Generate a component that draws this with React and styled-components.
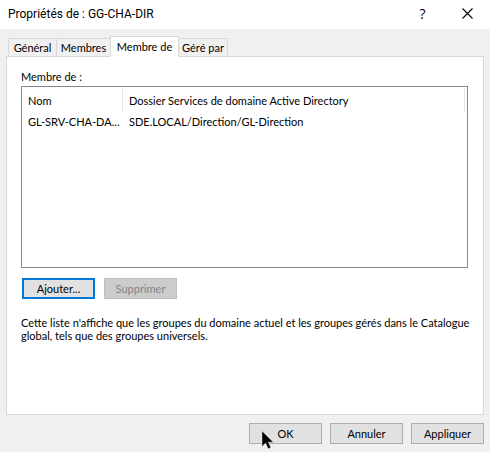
import React, { useState } from "react";
import styled, { createGlobalStyle } from "styled-components";

const GlobalStyle = createGlobalStyle`
  * {
    box-sizing: border-box;
  }
  body {
    margin: 0;
    background: #f0f0f0;
    color: #000;
    font-family: Lato, "Liberation Sans", Arial, sans-serif;
    font-size: 11px;
    line-height: 13px;
  }
  button {
    font: inherit;
    color: inherit;
  }
`;

const Dialog = styled.main`
  display: flex;
  flex-direction: column;
  min-height: 100vh;
  background: #f0f0f0;
`;

const TitleBar = styled.header`
  display: flex;
  align-items: center;
  height: 29px;
  padding-left: 8px;
  background: #fff;
`;

const Title = styled.h1`
  flex: 1;
  margin: 0;
  padding-bottom: 2px;
  font-family: Roboto, "Noto Sans", sans-serif;
  font-size: 12px;
  font-weight: 400;
  line-height: 16px;
`;

const CaptionButton = styled.button`
  display: flex;
  align-items: center;
  justify-content: center;
  width: 45px;
  height: 28px;
  padding: 0 0 2px;
  border: 0;
  background: transparent;
  font-family: "Open Sans", "Noto Sans", sans-serif;
  font-size: 14px;
`;

const Tabs = styled.div`
  display: flex;
  align-items: flex-end;
  height: 28px;
  margin: 0 6px -1px;
  padding-left: 2px;
`;

const Tab = styled.button`
  position: relative;
  z-index: ${(p) => (p.$active ? 1 : 0)};
  width: ${(p) => p.$width}px;
  height: ${(p) => (p.$active ? 21 : 19)}px;
  margin-left: ${(p) => (p.$first ? 0 : -1)}px;
  padding: 0 0 ${(p) => (p.$active ? 1 : 0)}px;
  border: 1px solid #d9d9d9;
  border-bottom-color: ${(p) => (p.$active ? "#fff" : "#d9d9d9")};
  background: ${(p) => (p.$active ? "#fff" : "#f0f0f0")};
  white-space: nowrap;
`;

const Panel = styled.section`
  flex: 1;
  display: flex;
  flex-direction: column;
  margin: 0 6px;
  padding: 13px 15px 0 14px;
  border: 1px solid #d9d9d9;
  background: #fff;
`;

const ListLabel = styled.h2`
  margin: 0 0 3px;
  font-size: 11px;
  font-weight: 400;
  line-height: 13px;
`;

const ListBox = styled.div`
  height: 182px;
  padding: 1px 2px 0 0;
  border: 1px solid #828790;
  background: #fff;
`;

const Table = styled.table`
  width: 100%;
  border-collapse: separate;
  border-spacing: 0;
  table-layout: fixed;
`;

const HeadCell = styled.th`
  width: ${(p) => p.$width};
  height: 24px;
  padding: 0 0 0 6px;
  border-right: 1px solid #e5e5e5;
  font-weight: 400;
  text-align: left;
`;

const Cell = styled.td`
  height: 19px;
  padding: 0 0 0 6px;
  white-space: nowrap;
`;

const Actions = styled.div`
  display: flex;
  gap: ${(p) => p.$gap}px;
  justify-content: ${(p) => (p.$end ? "flex-end" : "flex-start")};
  padding: ${(p) => p.$pad};
`;

const PushButton = styled.button`
  width: 73px;
  height: 21px;
  padding: 0;
  border: ${(p) => (p.$focused ? "2px solid #0078d7" : "1px solid #adadad")};
  background: #e1e1e1;
  text-align: center;

  &:disabled {
    border-color: #bfbfbf;
    background: #ccc;
    color: #838383;
  }
`;

const Note = styled.p`
  margin: 17px -8px 0 0;
`;

const Pointer = styled.svg`
  position: absolute;
  left: 12px;
  top: 7px;
  pointer-events: none;
`;

const PointerAnchor = styled.div`
  position: relative;
  display: flex;
`;

const tabs = [
  { label: "Général", width: 49 },
  { label: "Membres", width: 55 },
  { label: "Membre de", width: 69 },
  { label: "Géré par", width: 50 },
];

const groups = [
  { name: "GL-SRV-CHA-DA...", folder: "SDE.LOCAL/Direction/GL-Direction" },
];

export default function App() {
  const [active, setActive] = useState("Membre de");

  return (
    <Dialog>
      <GlobalStyle />
      <TitleBar>
        <Title>Propriétés de : GG-CHA-DIR</Title>
        <CaptionButton aria-label="Aide">?</CaptionButton>
        <CaptionButton aria-label="Fermer">
          <svg width="11" height="11" viewBox="0 0 11 11" aria-hidden="true">
            <path d="M.5.5l10 10M10.5.5l-10 10" stroke="#000" strokeWidth="1.1" fill="none" />
          </svg>
        </CaptionButton>
      </TitleBar>

      <Tabs role="tablist">
        {tabs.map((tab, i) => (
          <Tab
            key={tab.label}
            role="tab"
            aria-selected={tab.label === active}
            $active={tab.label === active}
            $first={i === 0}
            $width={tab.width}
            onClick={() => setActive(tab.label)}
          >
            {tab.label}
          </Tab>
        ))}
      </Tabs>

      <Panel role="tabpanel">
        <ListLabel id="member-of">Membre de :</ListLabel>
        <ListBox>
          <Table aria-labelledby="member-of">
            <thead>
              <tr>
                <HeadCell $width="101px">Nom</HeadCell>
                <HeadCell $width="auto">Dossier Services de domaine Active Directory</HeadCell>
              </tr>
            </thead>
            <tbody>
              {groups.map((group) => (
                <tr key={group.name}>
                  <Cell>{group.name}</Cell>
                  <Cell>{group.folder}</Cell>
                </tr>
              ))}
            </tbody>
          </Table>
        </ListBox>
        <Actions $gap={9} $pad="10px 0 0 1px">
          <PushButton $focused>Ajouter...</PushButton>
          <PushButton disabled>Supprimer</PushButton>
        </Actions>
        <Note>
          Cette liste n'affiche que les groupes du domaine actuel et les groupes gérés dans le
          Catalogue global, tels que des groupes universels.
        </Note>
      </Panel>

      <Actions $gap={8} $end $pad="8px 6px">
        <PointerAnchor>
          <PushButton>OK</PushButton>
          <Pointer width="13" height="20" viewBox="0 0 13 20" aria-hidden="true">
            <path
              d="M1 1v15.500l3.600-3.400 2.600 5.700 2.600-1.200-2.500-5.400h5z"
              fill="#000"
              stroke="#e1e1e1"
              strokeWidth=".5"
            />
          </Pointer>
        </PointerAnchor>
        <PushButton>Annuler</PushButton>
        <PushButton>Appliquer</PushButton>
      </Actions>
    </Dialog>
  );
}
